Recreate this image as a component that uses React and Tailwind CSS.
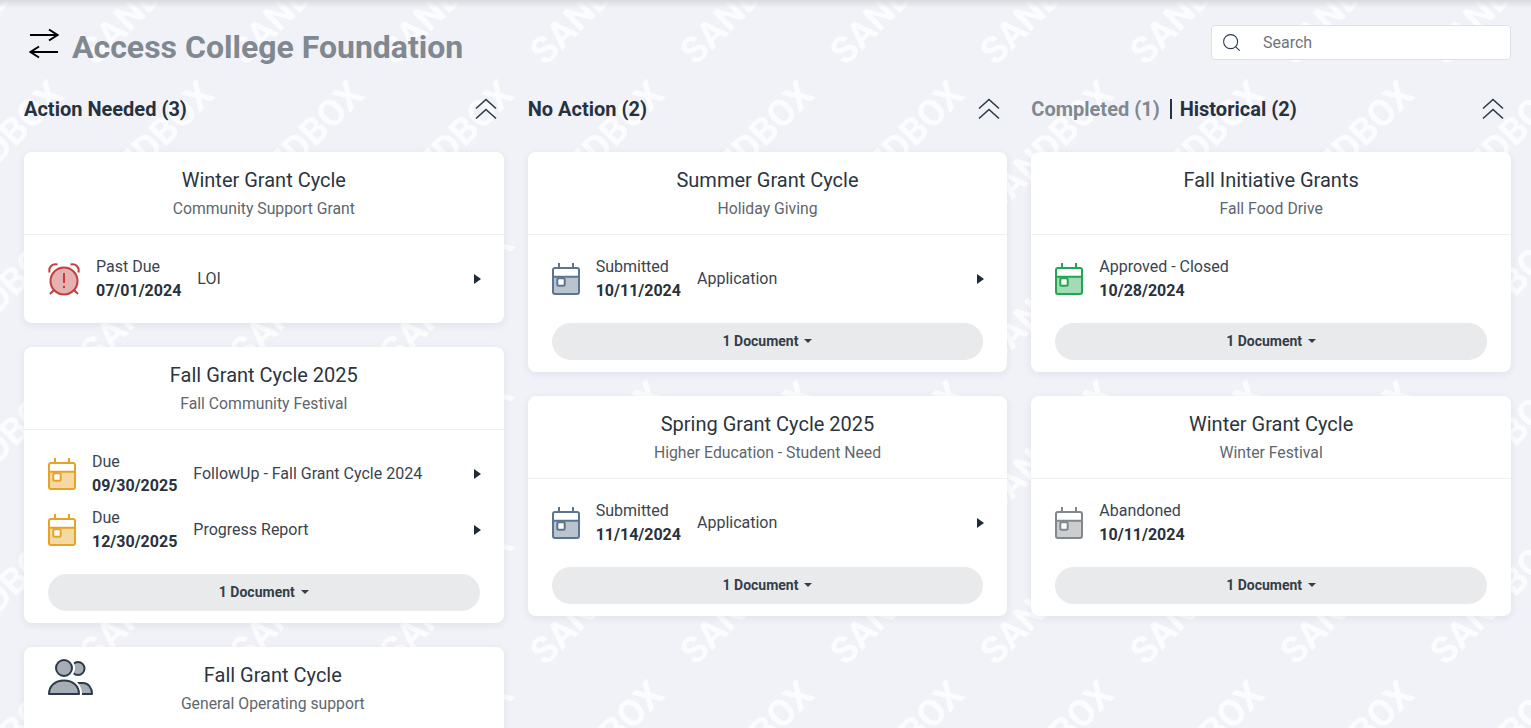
import React from "react";
import { Search } from "lucide-react";

const columns = [
  {
    cards: [
      {
        title: "Winter Grant Cycle",
        sub: "Community Support Grant",
        rows: [{ icon: "alarm", status: "Past Due", date: "07/01/2024", label: "LOI", arrow: true }],
      },
      {
        title: "Fall Grant Cycle 2025",
        sub: "Fall Community Festival",
        rows: [
          { icon: "amber", status: "Due", date: "09/30/2025", label: "FollowUp - Fall Grant Cycle 2024", arrow: true },
          { icon: "amber", status: "Due", date: "12/30/2025", label: "Progress Report", arrow: true },
        ],
        doc: true,
      },
      { title: "Fall Grant Cycle", sub: "General Operating support", people: true },
    ],
  },
  {
    cards: [
      {
        title: "Summer Grant Cycle",
        sub: "Holiday Giving",
        rows: [{ icon: "slate", status: "Submitted", date: "10/11/2024", label: "Application", arrow: true }],
        doc: true,
      },
      {
        title: "Spring Grant Cycle 2025",
        sub: "Higher Education - Student Need",
        rows: [{ icon: "slate", status: "Submitted", date: "11/14/2024", label: "Application", arrow: true }],
        doc: true,
      },
    ],
  },
  {
    cards: [
      {
        title: "Fall Initiative Grants",
        sub: "Fall Food Drive",
        rows: [{ icon: "green", status: "Approved - Closed", date: "10/28/2024" }],
        doc: true,
      },
      {
        title: "Winter Grant Cycle",
        sub: "Winter Festival",
        rows: [{ icon: "gray", status: "Abandoned", date: "10/11/2024" }],
        doc: true,
      },
    ],
  },
];

const calendarColors = {
  amber: { stroke: "#e8a325", fill: "#f5d9a3" },
  slate: { stroke: "#5b7591", fill: "#b9c4cf" },
  green: { stroke: "#22a650", fill: "#a3dbb6" },
  gray: { stroke: "#82878d", fill: "#cbced1" },
};

const CalendarIcon = ({ color }) => {
  const c = calendarColors[color];
  return (
    <svg width="32" height="34" viewBox="0 0 32 34" fill="none" className="shrink-0">
      <path d="M1 14.700h26V30a2 2 0 0 1-2 2H3a2 2 0 0 1-2-2z" fill={c.fill} />
      <path d="M1 14.700h26M7 1v5M21 1v5" stroke={c.stroke} strokeWidth="2" />
      <rect x="1" y="6" width="26" height="26" rx="2" stroke={c.stroke} strokeWidth="2" />
      <rect x="5.300" y="16.300" width="7.400" height="7.400" rx="1.500" fill="#fff" stroke={c.stroke} strokeWidth="2" />
    </svg>
  );
};

const AlarmIcon = () => (
  <svg width="36" height="36" viewBox="0 0 36 36" fill="none" className="shrink-0">
    <circle cx="16" cy="20" r="13.500" fill="#e6b1b1" stroke="#c63c3e" strokeWidth="2" />
    <path d="M16 12v10" stroke="#c63c3e" strokeWidth="2" />
    <circle cx="16" cy="26" r="1.200" fill="#c63c3e" />
    <path d="M1.500 11.500C.5 6 4 2.500 9.500 3.500M30.500 11.500c1-5.500-2.500-9-8-8M6 29l-4 4M26 29l4 4" stroke="#c63c3e" strokeWidth="2" />
  </svg>
);

const PeopleIcon = () => (
  <svg width="46" height="38" viewBox="0 0 46 38" fill="none">
    <circle cx="30" cy="9.500" r="6.500" fill="#a7adb5" stroke="#2b3a4a" strokeWidth="2" />
    <path d="M30 35V24h5c5.500 0 9 5 9 11z" fill="#a7adb5" stroke="#2b3a4a" strokeWidth="2" strokeLinejoin="round" />
    <circle cx="16" cy="9" r="8" fill="#a7adb5" stroke="#fff" strokeWidth="6" />
    <circle cx="16" cy="9" r="8" fill="#a7adb5" stroke="#2b3a4a" strokeWidth="2" />
    <path d="M1 35c0-8 6-13.500 15-13.500S31 27 31 35z" fill="#a7adb5" stroke="#fff" strokeWidth="6" strokeLinejoin="round" />
    <path d="M1 35c0-8 6-13.500 15-13.500S31 27 31 35z" fill="#a7adb5" stroke="#2b3a4a" strokeWidth="2" strokeLinejoin="round" />
  </svg>
);

const SwapIcon = () => (
  <svg width="30" height="32" viewBox="0 0 30 32" fill="none" stroke="#000" strokeWidth="2" className="-mt-[6px]">
    <path d="M1 7h27M20 1.500 28.500 7 20 12.500" />
    <path d="M29 24H2M10 18.500 1.500 24l8.500 5.500" />
  </svg>
);

const Chevrons = () => (
  <svg width="22" height="22" viewBox="0 0 22 22" fill="none" stroke="#2b3a4a" strokeWidth="1.6" className="shrink-0">
    <path d="M1 10.500 11 1.500l10 9" />
    <path d="M1 20.500 11 11.500l10 9" />
  </svg>
);

const Row = ({ row }) => (
  <div className="flex items-center h-12">
    {row.icon === "alarm" ? <AlarmIcon /> : <CalendarIcon color={row.icon} />}
    <div className="ml-3 leading-6 whitespace-nowrap">
      <div>{row.status}</div>
      <div className="font-bold text-[#28323e]">{row.date}</div>
    </div>
    <div className="ml-4 flex-1">{row.label}</div>
    {row.arrow && <div className="w-0 h-0 mr-[-1px] border-y-[5px] border-y-transparent border-l-[7px] border-l-[#212b36]" />}
  </div>
);

const Card = ({ card }) => (
  <div className="relative bg-white rounded-lg shadow-[0_2px_8px_rgba(30,40,70,0.08)] text-[#3a4450]">
    {card.people && (
      <div className="absolute left-6 top-3">
        <PeopleIcon />
      </div>
    )}
    <div className={`h-[83px] border-b border-[#eef0f2] flex flex-col items-center pt-4 ${card.people ? "pl-[18px]" : ""}`}>
      <div className="text-xl leading-6 text-[#2c3540]">{card.title}</div>
      <div className="mt-[5px] text-[15.75px] leading-6 text-[#60666d]">{card.sub}</div>
    </div>
    <div className={`px-6 pt-5 ${card.doc ? "pb-3" : "pb-5"}`}>
      {card.rows ? (
        <div className="flex flex-col gap-2">
          {card.rows.map((r) => (
            <Row key={r.date} row={r} />
          ))}
        </div>
      ) : (
        <div className="h-20" />
      )}
      {card.doc && (
        <div className="mt-5 h-[37px] pb-[2px] rounded-full bg-[#e9eaec] flex items-center justify-center gap-1.5 text-sm font-bold text-[#343e4a]">
          1 Document
          <span className="w-0 h-0 border-x-[4px] border-x-transparent border-t-[4px] border-t-[#343e4a]" />
        </div>
      )}
    </div>
  </div>
);

const Heading = ({ index }) => {
  if (index === 0) return <div className="text-xl font-bold text-[#263240]">Action Needed (3)</div>;
  if (index === 1) return <div className="text-xl font-bold text-[#263240]">No Action (2)</div>;
  return (
    <div className="flex items-center text-xl font-bold text-[#263240]">
      <span className="text-[#808890]">Completed (1)</span>
      <span className="ml-[10px] mr-[8px] w-0.5 h-5 bg-[#263240]" />
      <span>Historical (2)</span>
    </div>
  );
};

export default function App() {
  return (
    <div className="relative h-[728px] overflow-hidden bg-[#f1f2f8] font-['Roboto',sans-serif]">
      {/* watermark */}
      <svg className="absolute inset-0 w-full h-full pointer-events-none">
        <defs>
          <pattern id="wm" width="150" height="150" patternUnits="userSpaceOnUse" x="70" y="70">
            <text
              transform="translate(76.5 77.5) rotate(-45)"
              y="13"
              textAnchor="middle"
              fontSize="37"
              fontWeight="700"
              fill="#fff"
              fillOpacity="0.75"
              fontFamily="Roboto, sans-serif"
            >
              SANDBOX
            </text>
          </pattern>
        </defs>
        <rect width="100%" height="100%" fill="url(#wm)" />
      </svg>
      <div className="absolute top-0 inset-x-0 h-2 bg-gradient-to-b from-[#d9dade] to-transparent" />

      <div className="relative pl-6 pr-5">
        <div className="flex items-center justify-between h-[94px]">
          <div className="flex items-center ml-[5px]">
            <SwapIcon />
            <h1 className="ml-[13px] text-[32px] font-bold text-[#808890]">Access College Foundation</h1>
          </div>
          <div className="flex items-center w-[300px] h-[35px] bg-white border border-[#dfe1e6] rounded mb-[10px]">
            <Search size={21} strokeWidth={1.2} className="ml-[9px] text-[#2b3a4a]" />
            <span className="ml-[21px] pt-[2px] text-[#70757b]">Search</span>
          </div>
        </div>
        <div className="grid grid-cols-3 gap-6">
          {columns.map((col, i) => (
            <div key={i}>
              <div className="flex items-center justify-between h-[30px] mb-[28px] pr-[7px]">
                <Heading index={i} />
                <Chevrons />
              </div>
              <div className="flex flex-col gap-6">
                {col.cards.map((c) => (
                  <Card key={c.title + c.sub} card={c} />
                ))}
              </div>
            </div>
          ))}
        </div>
      </div>
    </div>
  );
}
